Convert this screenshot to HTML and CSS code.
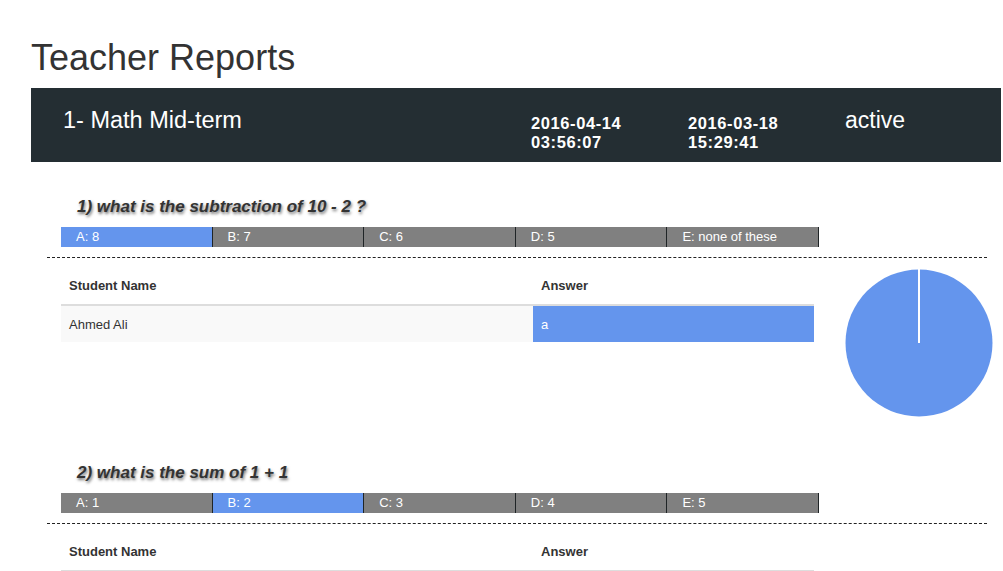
FILE: index.html
```html
<!DOCTYPE html>
<html>
<head>
<meta charset="utf-8">
<title>Teacher Reports</title>
<link rel="stylesheet" href="styles.css">
</head>
<body>
<div class="page">
  <h1 class="page-title">Teacher Reports</h1>
  <div class="exam">
    <div class="exam-head">
      <div class="exam-name">1- Math Mid-term</div>
      <div class="exam-date">2016-04-14<br>03:56:07</div>
      <div class="exam-date">2016-03-18<br>15:29:41</div>
      <div class="exam-status">active</div>
    </div>

    <section class="question">
      <h2 class="q-title">1) what is the subtraction of 10 - 2 ?</h2>
      <div class="choices">
        <div class="choice is-correct">A: 8</div>
        <div class="choice">B: 7</div>
        <div class="choice">C: 6</div>
        <div class="choice">D: 5</div>
        <div class="choice">E: none of these</div>
      </div>
      <div class="divider"></div>
      <div class="q-body">
        <table class="answers">
          <thead>
            <tr><th class="col-name">Student Name</th><th>Answer</th></tr>
          </thead>
          <tbody>
            <tr><td class="col-name">Ahmed Ali</td><td class="is-correct">a</td></tr>
          </tbody>
        </table>
        <svg class="pie" width="148" height="148" viewBox="0 0 148 148">
          <circle cx="74" cy="74" r="73.5" fill="#6495ed"/>
          <line x1="74" y1="0" x2="74" y2="74" stroke="#ffffff" stroke-width="2"/>
        </svg>
      </div>
    </section>

    <section class="question">
      <h2 class="q-title">2) what is the sum of 1 + 1</h2>
      <div class="choices">
        <div class="choice">A: 1</div>
        <div class="choice is-correct">B: 2</div>
        <div class="choice">C: 3</div>
        <div class="choice">D: 4</div>
        <div class="choice">E: 5</div>
      </div>
      <div class="divider"></div>
      <div class="q-body">
        <table class="answers">
          <thead>
            <tr><th class="col-name">Student Name</th><th>Answer</th></tr>
          </thead>
          <tbody>
            <tr><td class="col-name">Ahmed Ali</td><td class="is-correct">b</td></tr>
          </tbody>
        </table>
      </div>
    </section>
  </div>
</div>
</body>
</html>
```
FILE: styles.css
```css
html, body {
  margin: 0;
  padding: 0;
  background: #ffffff;
}

body {
  font-family: "Liberation Sans", Arial, sans-serif;
  color: #333333;
  overflow: hidden;
}

.page {
  padding-left: 31px;
}

.page-title {
  margin: 38px 0 10px 0;
  font-size: 36px;
  line-height: 40px;
  font-weight: normal;
  color: #333333;
}

.exam {
  width: 970px;
}

.exam-head {
  display: grid;
  grid-template-columns: 468px 157px 157px 1fr;
  height: 74px;
  padding-left: 32px;
  background: #242e33;
  color: #ffffff;
}

.exam-name {
  padding-top: 18px;
  font-size: 23.5px;
  line-height: 28px;
}

.exam-status {
  padding-top: 18px;
  font-size: 23px;
  line-height: 28px;
}

.exam-date {
  padding-top: 26px;
  font-size: 16.5px;
  line-height: 19px;
  font-weight: bold;
  letter-spacing: 0.6px;
}

.question {
  margin-left: 16px;
  width: 940px;
}

.q-title {
  margin: 35px 0 10px 30px;
  font-size: 17px;
  line-height: 20px;
  font-style: italic;
  font-weight: bold;
  color: #333333;
  text-shadow: 1px 2px 3px rgba(0, 0, 0, 0.55);
}

.choices {
  display: flex;
  width: 758px;
  height: 20px;
  margin-left: 14px;
}

.choice {
  flex: 1 1 0;
  box-sizing: border-box;
  padding-left: 15px;
  border-right: 1px solid #1f2426;
  background: #808080;
  color: #ffffff;
  font-size: 13px;
  line-height: 20px;
  white-space: nowrap;
}

.choice.is-correct {
  background: #6495ed;
}

.divider {
  margin-top: 10px;
  border-top: 1px dashed #222222;
}

.q-body {
  display: flex;
  align-items: flex-start;
}

.answers {
  flex: none;
  width: 753px;
  margin: 10px 0 0 14px;
  border-collapse: collapse;
  font-size: 13px;
  line-height: 20px;
}

.answers th,
.answers td {
  padding: 8px;
  text-align: left;
  vertical-align: top;
}

.answers th {
  font-weight: bold;
  color: #333333;
  border-bottom: 2px solid #dddddd;
}

.answers .col-name {
  width: 456px;
}

.answers td {
  padding-top: 9px;
  padding-bottom: 7px;
  background: #f9f9f9;
  color: #333333;
}

.answers td.is-correct {
  background: #6495ed;
  color: #ffffff;
}

.pie {
  display: block;
  flex: none;
  margin: 11px 0 11px 31px;
}
```
